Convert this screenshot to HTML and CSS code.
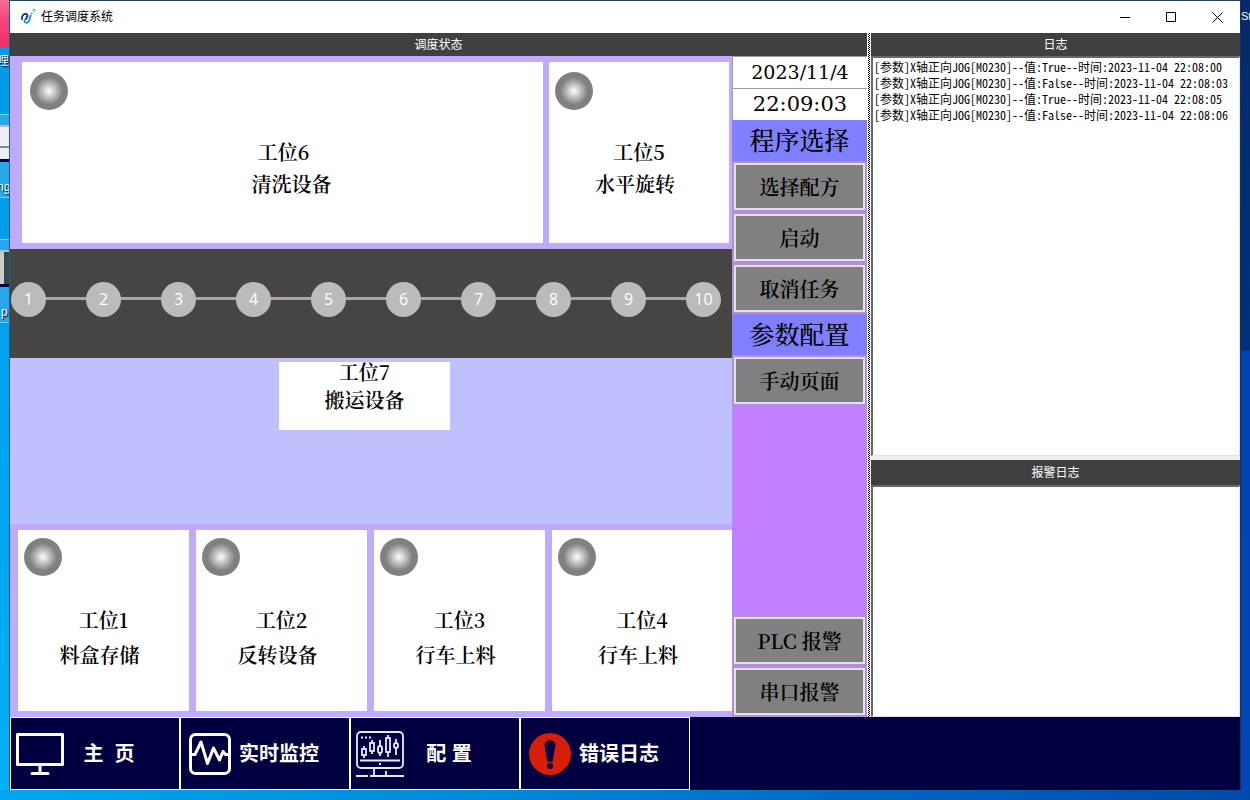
FILE: index.html
```html
<!DOCTYPE html>
<html lang="zh-CN">
<head>
<meta charset="utf-8">
<title>任务调度系统</title>
<link rel="stylesheet" href="styles.css">
</head>
<body>
<div class="desktop">
  <aside class="desk-left" aria-hidden="true">
    <div class="app-pink"></div>
    <span class="desk-name desk-name-a">哩</span>
    <div class="desk-sel desk-sel-a"></div>
    <div class="desk-tile desk-tile-a"></div>
    <span class="desk-name desk-name-b">ng</span>
    <div class="desk-sel desk-sel-b"></div>
    <div class="desk-tile desk-tile-b"></div>
    <span class="desk-name desk-name-c">p</span>
  </aside>
  <div class="window">
    <header class="titlebar">
      <svg class="logo" viewBox="0 0 16 16" width="16" height="16" fill="none" stroke-linecap="round">
        <path d="M1.800 10C1.500 6.500 4.500 4.300 6.500 5C8.500 6 7 8 6 10" stroke="#1c2a86" stroke-width="1.900"/>
        <path d="M4.500 11C4 14.500 7.500 14.500 9 12C10 10 9.500 8.500 10.800 6.500" stroke="#1a9fd0" stroke-width="1.900"/>
        <path d="M11.500 4.500h.5M14 2.500h.2M13 1h.1M14.500 .500h.1" stroke="#1a8fd0" stroke-width="1.300"/>
      </svg>
      <h1 class="title">任务调度系统</h1>
      <div class="controls">
        <button class="control" aria-label="最小化"><svg viewBox="0 0 11 11" width="11" height="11"><path d="M0 5.500h10"/></svg></button>
        <button class="control" aria-label="最大化"><svg viewBox="0 0 11 11" width="11" height="11"><path d="M.5.5h9v9h-9z"/></svg></button>
        <button class="control" aria-label="关闭"><svg viewBox="0 0 11 11" width="11" height="11"><path d="M.5.5l10 10M10.500.5l-10 10"/></svg></button>
      </div>
    </header>
    <main class="workspace">
      <section class="status">
        <h2 class="bar">调度状态</h2>
        <div class="status-body">
          <div class="floor">
            <div class="row row-top">
              <article class="card card-wide"><span class="lamp"></span><p class="line">工位6</p><p class="line line-right">清洗设备</p></article>
              <article class="card"><span class="lamp"></span><p class="line">工位5</p><p class="line line-left">水平旋转</p></article>
            </div>
            <ol class="track">
              <li class="stop">1</li><li class="stop">2</li><li class="stop">3</li><li class="stop">4</li><li class="stop">5</li><li class="stop">6</li><li class="stop">7</li><li class="stop">8</li><li class="stop">9</li><li class="stop">10</li>
            </ol>
            <div class="aisle">
              <article class="carrier"><p class="line">工位7</p><p class="line">搬运设备</p></article>
            </div>
            <div class="row row-bottom">
              <article class="card"><span class="lamp"></span><p class="line">工位1</p><p class="line line-left">料盒存储</p></article>
              <article class="card"><span class="lamp"></span><p class="line">工位2</p><p class="line line-left">反转设备</p></article>
              <article class="card"><span class="lamp"></span><p class="line">工位3</p><p class="line line-left">行车上料</p></article>
              <article class="card"><span class="lamp"></span><p class="line">工位4</p><p class="line line-left">行车上料</p></article>
            </div>
          </div>
          <aside class="side">
            <time class="clock clock-date">2023/11/4</time>
            <time class="clock clock-time">22:09:03</time>
            <h3 class="group">程序选择</h3>
            <div class="slot"><button class="action">选择配方</button></div>
            <div class="slot"><button class="action">启动</button></div>
            <div class="slot"><button class="action">取消任务</button></div>
            <h3 class="group">参数配置</h3>
            <div class="slot"><button class="action">手动页面</button></div>
            <div class="slot slot-end"><button class="action">PLC 报警</button></div>
            <div class="slot"><button class="action">串口报警</button></div>
          </aside>
        </div>
      </section>
      <div class="splitter"></div>
      <section class="logs">
        <h2 class="bar">日志</h2>
        <ul class="log log-main">
          <li>[参数]X轴正向JOG[M0230]--值:True--时间:2023-11-04 22:08:00</li>
          <li>[参数]X轴正向JOG[M0230]--值:False--时间:2023-11-04 22:08:03</li>
          <li>[参数]X轴正向JOG[M0230]--值:True--时间:2023-11-04 22:08:05</li>
          <li>[参数]X轴正向JOG[M0230]--值:False--时间:2023-11-04 22:08:06</li>
        </ul>
        <h2 class="bar bar-alarm">报警日志</h2>
        <ul class="log log-alarm"></ul>
      </section>
    </main>
    <nav class="tabs">
      <button class="tab">
        <span class="tab-icon"><svg viewBox="0 0 48 42" width="48" height="42" fill="none" stroke="#fff" stroke-width="3"><path d="M1.500 1.500h45v30h-45z" stroke-linejoin="round"/><path d="M24 32v8M16 40.500h16" stroke-linecap="round"/></svg></span>
        <span class="tab-text">主&nbsp; 页</span>
      </button>
      <button class="tab">
        <span class="tab-icon"><svg viewBox="0 0 42 42" width="42" height="42" fill="none" stroke="#fff" stroke-width="3" stroke-linejoin="round"><rect x="1.500" y="1.500" width="39" height="39" rx="5"/><path d="M3 21.500h3L12 9L18.500 30.500L24.500 15L30.500 27L34 18.500L36.500 21.500H39"/></svg></span>
        <span class="tab-text">实时监控</span>
      </button>
      <button class="tab">
        <span class="tab-icon"><svg viewBox="0 0 48 46" width="48" height="46" fill="none" stroke="#e8eaff" stroke-width="1.800"><rect x="1" y="1" width="46" height="36" rx="4"/><path d="M4 29.500h40M18 37v8M30 40v5M0 45h12M14 45h34M23 33h2"/><path d="M5 6.500h2M9 6.500h2M13 6.500h2"/><path d="M8 15v3M8 24v3M16 9v3M16 20v3M24 9v6M24 22v3M32 4v3M32 21v5M40 8v4M40 17v7"/><rect x="6" y="18" width="4" height="6"/><rect x="14" y="12" width="4" height="8"/><rect x="22" y="15" width="4" height="7" rx="2"/><rect x="30" y="7" width="4" height="14"/><rect x="38" y="12" width="4" height="5" rx="2"/></svg></span>
        <span class="tab-text">配 置</span>
      </button>
      <button class="tab">
        <span class="tab-icon"><svg viewBox="0 0 42 42" width="42" height="42"><circle cx="21" cy="21" r="21" fill="#d81e06"/><path d="M15.500 12C15.500 5.500 26.500 5.500 26.500 12L24 27C23.500 30 18.500 30 18 27z" fill="#000040"/><circle cx="21" cy="33" r="3" fill="#000040"/></svg></span>
        <span class="tab-text">错误日志</span>
      </button>
    </nav>
  </div>
  <aside class="desk-right" aria-hidden="true"><span class="desk-name desk-name-d">St</span></aside>
</div>
</body>
</html>
```
FILE: styles.css
```css
* { box-sizing: border-box; margin: 0; padding: 0; }
button { font: inherit; color: inherit; border: 0; background: none; }
ol, ul { list-style: none; }
body { font: 12px/16px "Liberation Sans", "Noto Sans CJK SC", sans-serif; color: #000; }

.desktop {
  display: grid;
  grid-template-columns: 10px minmax(0, 1fr) 10px;
  min-height: 100vh;
  padding: 0 0 10px;
  background: linear-gradient(90deg, #00a8ee, #0088d8 40%, #0060c0 75%, #004aa8);
}
.desk-left { position: relative; overflow: hidden; background: linear-gradient(#0099e6, #00a2ee 50%, #00b0f4); border-right: 1px solid #1a5f92; }
.desk-right { position: relative; overflow: hidden; background: linear-gradient(#062a68, #003078 350px, #0042b0 351px, #0048b4); border-left: 1px solid #12335f; }
.desk-name { position: absolute; font-size: 12px; color: #fff; text-shadow: 1px 1px 1px #000; }
.desk-name-a { top: 53px; left: -3px; }
.desk-name-b { top: 179px; left: -3px; }
.desk-name-c { top: 304px; left: 1px; }
.desk-name-d { top: 8px; left: 0; font-size: 11px; text-shadow: none; }
.app-pink { position: absolute; top: 0; left: 0; width: 9px; height: 48px; border-radius: 0 0 3px 0; background: linear-gradient(#f0709a, #f4447c 40%, #f42f66); }
.desk-sel { position: absolute; left: 0; width: 9px; height: 84px; border: solid #80d0f8; border-width: 1px 0; background: #28a8ea; }
.desk-sel-a { top: 114px; }
.desk-sel-b { top: 239px; }
.desk-tile { position: absolute; left: 0; width: 9px; height: 37px; border-top: 2px solid #bbb; border-bottom: 3px solid #004; }
.desk-tile-a { top: 125px; background: linear-gradient(#eee 19px, #888 19px 21px, #eee 21px); }
.desk-tile-b { top: 250px; background: linear-gradient(90deg, #ccc 4px, #3c4444 4px); }

.window { display: flex; flex-direction: column; min-width: 0; background: #fff; border-top: 1px solid #20456b; }
.titlebar { display: flex; align-items: center; height: 32px; padding-left: 10px; gap: 5px; }
.title { flex: 1; font-size: 12px; font-weight: 400; }
.controls { display: flex; height: 100%; }
.control { display: grid; place-items: center; width: 46px; }
.control svg { fill: none; stroke: #000; stroke-width: 1; }

.workspace { flex: 1; display: grid; grid-template-columns: minmax(0, 857fr) 4px minmax(0, 369fr); }
.bar { height: 23px; background: #404040; color: #fff; font-size: 12px; font-weight: 400; line-height: 24px; text-align: center; }
.bar-alarm { height: 25px; line-height: 26px; }
.status, .logs { display: flex; flex-direction: column; }
.status-body { flex: 1; display: grid; grid-template-columns: minmax(0, 1fr) 135px; }
.floor { display: flex; flex-direction: column; background: #c0c0ff; font-family: "Noto Serif CJK SC", "Liberation Serif", "Noto Sans CJK SC", serif; font-size: 20px; font-weight: 600; }

.row { display: grid; background: #bfaaff; }
.row-top { grid-template-columns: 521fr 180fr; gap: 6px; padding: 6px 3px 6px 12px; line-height: 32px; }
.row-bottom { grid-template-columns: 171fr 171fr 171fr 180fr; gap: 7px; padding: 6px 0 6px 8px; line-height: 35px; }
.card { height: 181px; padding: 8px 6px; background: #fff; text-align: center; }
.row-top .card { padding-top: 10px; }
.card-wide { padding-left: 8px; }
.lamp { display: block; width: 38px; height: 38px; margin-bottom: 26px; border-radius: 50%; background: radial-gradient(circle closest-side, #fff, #808080 72%); }
.line-left { padding-right: 8px; }
.line-right { padding-left: 16px; }

.track { display: flex; justify-content: space-between; align-items: center; height: 109px; padding: 0 11px 8px 1px; background: linear-gradient(#aaa5a5, #aaa5a5) 18px 48px / calc(100% - 47px) 3px no-repeat #474543; }
.stop { width: 35px; height: 35px; border-radius: 50%; background: #bbb; color: #fff; font: 16px/35px "Open Sans", sans-serif; text-align: center; }
.aisle { flex: 1; display: flex; justify-content: center; align-items: flex-start; padding: 4px 13px 0 0; }
.carrier { display: flex; flex-direction: column; gap: 8px; width: 171px; height: 68px; background: #fff; text-align: center; line-height: 20px; }

.side { display: flex; flex-direction: column; background: #c080ff; font-family: "Noto Serif CJK SC", "Liberation Serif", "Noto Sans CJK SC", serif; font-size: 20px; font-weight: 600; }
.clock { height: 32px; border-top: 1px solid #a0a0a0; border-left: 1px solid #a0a0a0; background: #fff; font-family: "DejaVu Serif", serif; font-weight: 400; line-height: 31px; text-align: center; }
.clock-date { font-size: 19px; }
.clock-time { font-size: 21px; }
.group { height: 41px; background: #8080ff; font-size: 25px; font-weight: 500; line-height: 39px; text-align: center; }
.slot { padding: 2px; background: #b48fd8; }
.slot-end { margin-top: auto; }
.action { width: 100%; height: 47px; border: 2px solid #e3e0e6; background: #808080; }

.splitter { background: repeating-conic-gradient(#000 0 25%, #fff 0 50%) 0 0 / 2px 2px; border: solid #fff; border-width: 0 1px; }
.log { border: 2px solid #696969; border-right: 1px solid #e3e3e3; border-bottom: 1px solid #e3e3e3; background: #fff; padding: 1px; font-family: "Noto Sans Mono CJK SC", "Liberation Mono", "Noto Sans CJK SC", monospace; white-space: nowrap; }
.log-main { flex: 401; margin-bottom: 4px; box-shadow: 0 4px #f0f0f0; }
.log-alarm { flex: 231; }

.tabs { display: flex; height: 73px; background: #000040; }
.tab { display: flex; align-items: center; width: 170px; border: 1px solid #fff; color: #fff; font-size: 20px; font-weight: 700; }
.tab-icon { display: grid; place-items: center; width: 58px; }
.tab-text { width: 80px; text-align: center; white-space: nowrap; }
```
